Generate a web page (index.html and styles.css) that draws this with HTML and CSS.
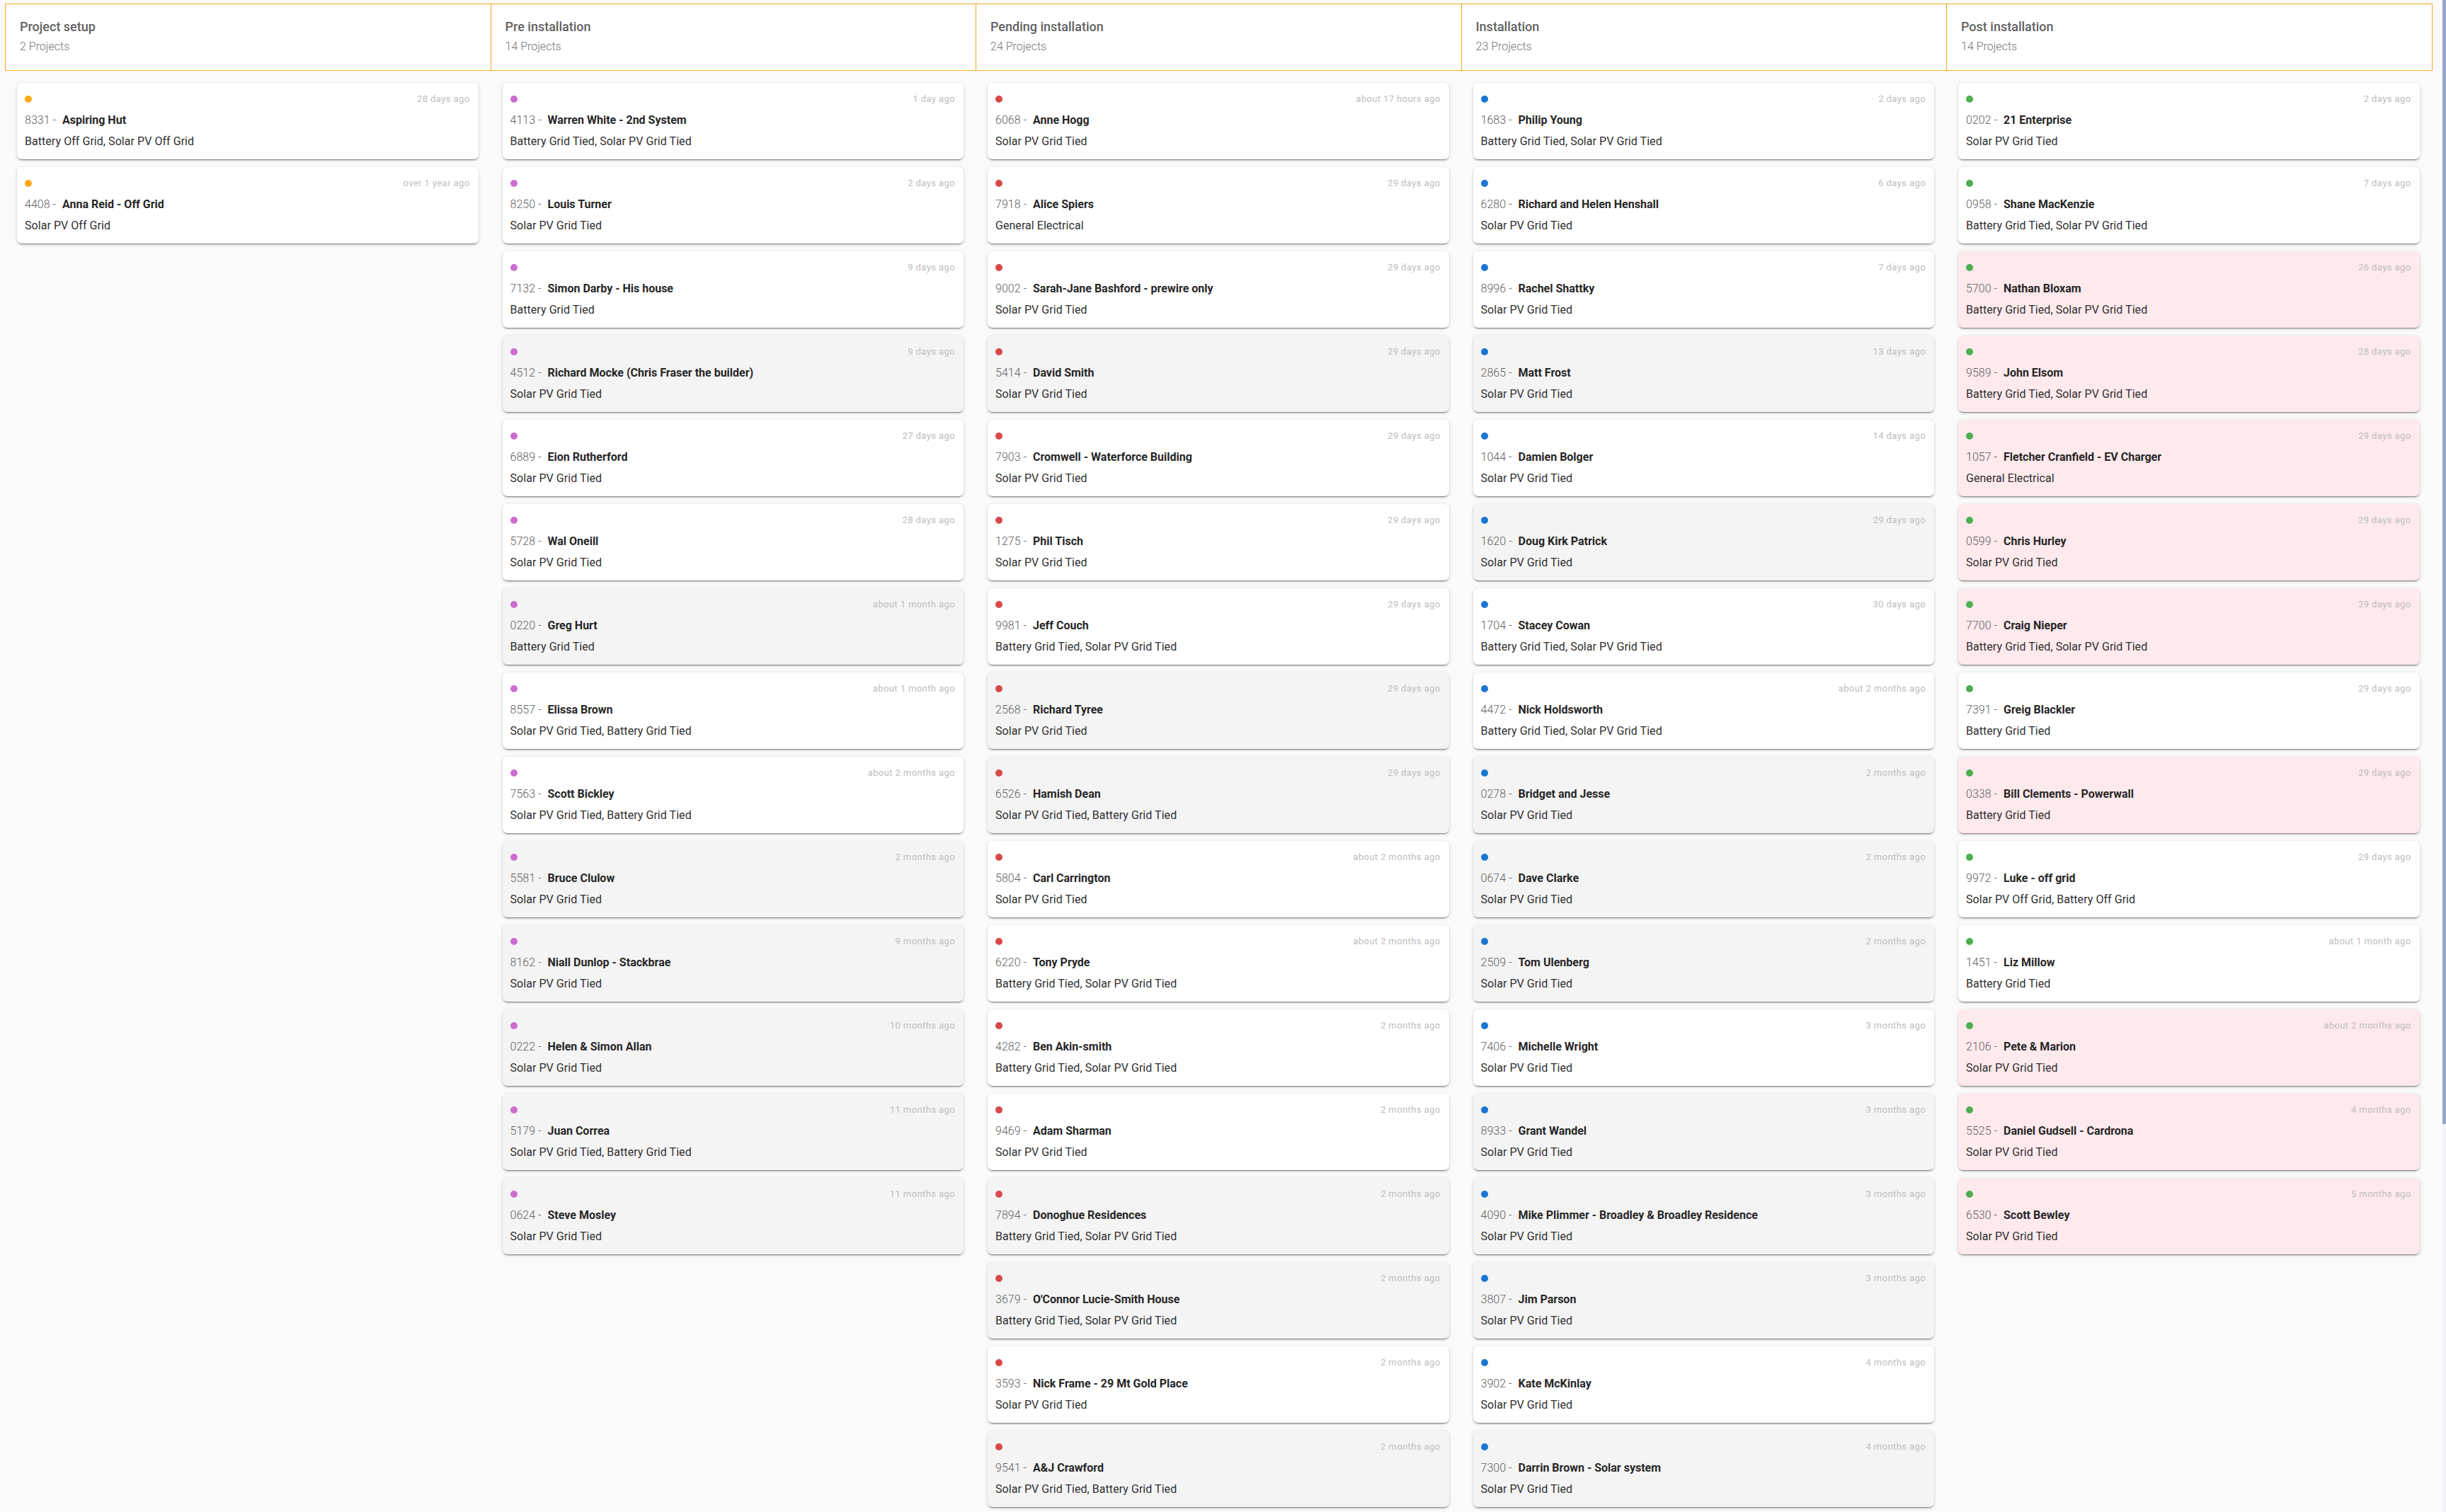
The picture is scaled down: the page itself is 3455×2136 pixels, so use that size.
FILE: index.html
```html
<!DOCTYPE html>
<html lang="en">
<head>
    <meta charset="UTF-8">
    <meta name="viewport" content="width=device-width, initial-scale=1.0">
    <title>Projects</title>
    <link rel="stylesheet" href="styles.css">
</head>
<body>
<div class="page">
<div class="board">

    <section class="column setup">
        <header class="column-head"><h2>Project setup</h2><p>2 Projects</p></header>
        <div class="card"><div class="card-top"><span class="dot"></span><span class="time">28 days ago</span></div><div class="card-title"><span class="num">8331 -</span><b>Aspiring Hut</b></div><div class="types">Battery Off Grid, Solar PV Off Grid</div></div>
        <div class="card"><div class="card-top"><span class="dot"></span><span class="time">over 1 year ago</span></div><div class="card-title"><span class="num">4408 -</span><b>Anna Reid - Off Grid</b></div><div class="types">Solar PV Off Grid</div></div>
    </section>

    <section class="column pre">
        <header class="column-head"><h2>Pre installation</h2><p>14 Projects</p></header>
        <div class="card"><div class="card-top"><span class="dot"></span><span class="time">1 day ago</span></div><div class="card-title"><span class="num">4113 -</span><b>Warren White - 2nd System</b></div><div class="types">Battery Grid Tied, Solar PV Grid Tied</div></div>
        <div class="card"><div class="card-top"><span class="dot"></span><span class="time">2 days ago</span></div><div class="card-title"><span class="num">8250 -</span><b>Louis Turner</b></div><div class="types">Solar PV Grid Tied</div></div>
        <div class="card"><div class="card-top"><span class="dot"></span><span class="time">9 days ago</span></div><div class="card-title"><span class="num">7132 -</span><b>Simon Darby - His house</b></div><div class="types">Battery Grid Tied</div></div>
        <div class="card grey"><div class="card-top"><span class="dot"></span><span class="time">9 days ago</span></div><div class="card-title"><span class="num">4512 -</span><b>Richard Mocke (Chris Fraser the builder)</b></div><div class="types">Solar PV Grid Tied</div></div>
        <div class="card"><div class="card-top"><span class="dot"></span><span class="time">27 days ago</span></div><div class="card-title"><span class="num">6889 -</span><b>Eion Rutherford</b></div><div class="types">Solar PV Grid Tied</div></div>
        <div class="card"><div class="card-top"><span class="dot"></span><span class="time">28 days ago</span></div><div class="card-title"><span class="num">5728 -</span><b>Wal Oneill</b></div><div class="types">Solar PV Grid Tied</div></div>
        <div class="card grey"><div class="card-top"><span class="dot"></span><span class="time">about 1 month ago</span></div><div class="card-title"><span class="num">0220 -</span><b>Greg Hurt</b></div><div class="types">Battery Grid Tied</div></div>
        <div class="card"><div class="card-top"><span class="dot"></span><span class="time">about 1 month ago</span></div><div class="card-title"><span class="num">8557 -</span><b>Elissa Brown</b></div><div class="types">Solar PV Grid Tied, Battery Grid Tied</div></div>
        <div class="card"><div class="card-top"><span class="dot"></span><span class="time">about 2 months ago</span></div><div class="card-title"><span class="num">7563 -</span><b>Scott Bickley</b></div><div class="types">Solar PV Grid Tied, Battery Grid Tied</div></div>
        <div class="card grey"><div class="card-top"><span class="dot"></span><span class="time">2 months ago</span></div><div class="card-title"><span class="num">5581 -</span><b>Bruce Clulow</b></div><div class="types">Solar PV Grid Tied</div></div>
        <div class="card grey"><div class="card-top"><span class="dot"></span><span class="time">9 months ago</span></div><div class="card-title"><span class="num">8162 -</span><b>Niall Dunlop - Stackbrae</b></div><div class="types">Solar PV Grid Tied</div></div>
        <div class="card grey"><div class="card-top"><span class="dot"></span><span class="time">10 months ago</span></div><div class="card-title"><span class="num">0222 -</span><b>Helen &amp; Simon Allan</b></div><div class="types">Solar PV Grid Tied</div></div>
        <div class="card grey"><div class="card-top"><span class="dot"></span><span class="time">11 months ago</span></div><div class="card-title"><span class="num">5179 -</span><b>Juan Correa</b></div><div class="types">Solar PV Grid Tied, Battery Grid Tied</div></div>
        <div class="card grey"><div class="card-top"><span class="dot"></span><span class="time">11 months ago</span></div><div class="card-title"><span class="num">0624 -</span><b>Steve Mosley</b></div><div class="types">Solar PV Grid Tied</div></div>
    </section>

    <section class="column pending">
        <header class="column-head"><h2>Pending installation</h2><p>24 Projects</p></header>
        <div class="card"><div class="card-top"><span class="dot"></span><span class="time">about 17 hours ago</span></div><div class="card-title"><span class="num">6068 -</span><b>Anne Hogg</b></div><div class="types">Solar PV Grid Tied</div></div>
        <div class="card"><div class="card-top"><span class="dot"></span><span class="time">29 days ago</span></div><div class="card-title"><span class="num">7918 -</span><b>Alice Spiers</b></div><div class="types">General Electrical</div></div>
        <div class="card"><div class="card-top"><span class="dot"></span><span class="time">29 days ago</span></div><div class="card-title"><span class="num">9002 -</span><b>Sarah-Jane Bashford - prewire only</b></div><div class="types">Solar PV Grid Tied</div></div>
        <div class="card grey"><div class="card-top"><span class="dot"></span><span class="time">29 days ago</span></div><div class="card-title"><span class="num">5414 -</span><b>David Smith</b></div><div class="types">Solar PV Grid Tied</div></div>
        <div class="card"><div class="card-top"><span class="dot"></span><span class="time">29 days ago</span></div><div class="card-title"><span class="num">7903 -</span><b>Cromwell - Waterforce Building</b></div><div class="types">Solar PV Grid Tied</div></div>
        <div class="card"><div class="card-top"><span class="dot"></span><span class="time">29 days ago</span></div><div class="card-title"><span class="num">1275 -</span><b>Phil Tisch</b></div><div class="types">Solar PV Grid Tied</div></div>
        <div class="card"><div class="card-top"><span class="dot"></span><span class="time">29 days ago</span></div><div class="card-title"><span class="num">9981 -</span><b>Jeff Couch</b></div><div class="types">Battery Grid Tied, Solar PV Grid Tied</div></div>
        <div class="card grey"><div class="card-top"><span class="dot"></span><span class="time">29 days ago</span></div><div class="card-title"><span class="num">2568 -</span><b>Richard Tyree</b></div><div class="types">Solar PV Grid Tied</div></div>
        <div class="card grey"><div class="card-top"><span class="dot"></span><span class="time">29 days ago</span></div><div class="card-title"><span class="num">6526 -</span><b>Hamish Dean</b></div><div class="types">Solar PV Grid Tied, Battery Grid Tied</div></div>
        <div class="card"><div class="card-top"><span class="dot"></span><span class="time">about 2 months ago</span></div><div class="card-title"><span class="num">5804 -</span><b>Carl Carrington</b></div><div class="types">Solar PV Grid Tied</div></div>
        <div class="card"><div class="card-top"><span class="dot"></span><span class="time">about 2 months ago</span></div><div class="card-title"><span class="num">6220 -</span><b>Tony Pryde</b></div><div class="types">Battery Grid Tied, Solar PV Grid Tied</div></div>
        <div class="card"><div class="card-top"><span class="dot"></span><span class="time">2 months ago</span></div><div class="card-title"><span class="num">4282 -</span><b>Ben Akin-smith</b></div><div class="types">Battery Grid Tied, Solar PV Grid Tied</div></div>
        <div class="card"><div class="card-top"><span class="dot"></span><span class="time">2 months ago</span></div><div class="card-title"><span class="num">9469 -</span><b>Adam Sharman</b></div><div class="types">Solar PV Grid Tied</div></div>
        <div class="card grey"><div class="card-top"><span class="dot"></span><span class="time">2 months ago</span></div><div class="card-title"><span class="num">7894 -</span><b>Donoghue Residences</b></div><div class="types">Battery Grid Tied, Solar PV Grid Tied</div></div>
        <div class="card grey"><div class="card-top"><span class="dot"></span><span class="time">2 months ago</span></div><div class="card-title"><span class="num">3679 -</span><b>O'Connor Lucie-Smith House</b></div><div class="types">Battery Grid Tied, Solar PV Grid Tied</div></div>
        <div class="card"><div class="card-top"><span class="dot"></span><span class="time">2 months ago</span></div><div class="card-title"><span class="num">3593 -</span><b>Nick Frame - 29 Mt Gold Place</b></div><div class="types">Solar PV Grid Tied</div></div>
        <div class="card grey"><div class="card-top"><span class="dot"></span><span class="time">2 months ago</span></div><div class="card-title"><span class="num">9541 -</span><b>A&amp;J Crawford</b></div><div class="types">Solar PV Grid Tied, Battery Grid Tied</div></div>
    </section>

    <section class="column install">
        <header class="column-head"><h2>Installation</h2><p>23 Projects</p></header>
        <div class="card"><div class="card-top"><span class="dot"></span><span class="time">2 days ago</span></div><div class="card-title"><span class="num">1683 -</span><b>Philip Young</b></div><div class="types">Battery Grid Tied, Solar PV Grid Tied</div></div>
        <div class="card"><div class="card-top"><span class="dot"></span><span class="time">6 days ago</span></div><div class="card-title"><span class="num">6280 -</span><b>Richard and Helen Henshall</b></div><div class="types">Solar PV Grid Tied</div></div>
        <div class="card"><div class="card-top"><span class="dot"></span><span class="time">7 days ago</span></div><div class="card-title"><span class="num">8996 -</span><b>Rachel Shattky</b></div><div class="types">Solar PV Grid Tied</div></div>
        <div class="card grey"><div class="card-top"><span class="dot"></span><span class="time">13 days ago</span></div><div class="card-title"><span class="num">2865 -</span><b>Matt Frost</b></div><div class="types">Solar PV Grid Tied</div></div>
        <div class="card"><div class="card-top"><span class="dot"></span><span class="time">14 days ago</span></div><div class="card-title"><span class="num">1044 -</span><b>Damien Bolger</b></div><div class="types">Solar PV Grid Tied</div></div>
        <div class="card grey"><div class="card-top"><span class="dot"></span><span class="time">29 days ago</span></div><div class="card-title"><span class="num">1620 -</span><b>Doug Kirk Patrick</b></div><div class="types">Solar PV Grid Tied</div></div>
        <div class="card"><div class="card-top"><span class="dot"></span><span class="time">30 days ago</span></div><div class="card-title"><span class="num">1704 -</span><b>Stacey Cowan</b></div><div class="types">Battery Grid Tied, Solar PV Grid Tied</div></div>
        <div class="card"><div class="card-top"><span class="dot"></span><span class="time">about 2 months ago</span></div><div class="card-title"><span class="num">4472 -</span><b>Nick Holdsworth</b></div><div class="types">Battery Grid Tied, Solar PV Grid Tied</div></div>
        <div class="card grey"><div class="card-top"><span class="dot"></span><span class="time">2 months ago</span></div><div class="card-title"><span class="num">0278 -</span><b>Bridget and Jesse</b></div><div class="types">Solar PV Grid Tied</div></div>
        <div class="card grey"><div class="card-top"><span class="dot"></span><span class="time">2 months ago</span></div><div class="card-title"><span class="num">0674 -</span><b>Dave Clarke</b></div><div class="types">Solar PV Grid Tied</div></div>
        <div class="card grey"><div class="card-top"><span class="dot"></span><span class="time">2 months ago</span></div><div class="card-title"><span class="num">2509 -</span><b>Tom Ulenberg</b></div><div class="types">Solar PV Grid Tied</div></div>
        <div class="card"><div class="card-top"><span class="dot"></span><span class="time">3 months ago</span></div><div class="card-title"><span class="num">7406 -</span><b>Michelle Wright</b></div><div class="types">Solar PV Grid Tied</div></div>
        <div class="card grey"><div class="card-top"><span class="dot"></span><span class="time">3 months ago</span></div><div class="card-title"><span class="num">8933 -</span><b>Grant Wandel</b></div><div class="types">Solar PV Grid Tied</div></div>
        <div class="card grey"><div class="card-top"><span class="dot"></span><span class="time">3 months ago</span></div><div class="card-title"><span class="num">4090 -</span><b>Mike Plimmer - Broadley &amp; Broadley Residence</b></div><div class="types">Solar PV Grid Tied</div></div>
        <div class="card grey"><div class="card-top"><span class="dot"></span><span class="time">3 months ago</span></div><div class="card-title"><span class="num">3807 -</span><b>Jim Parson</b></div><div class="types">Solar PV Grid Tied</div></div>
        <div class="card"><div class="card-top"><span class="dot"></span><span class="time">4 months ago</span></div><div class="card-title"><span class="num">3902 -</span><b>Kate McKinlay</b></div><div class="types">Solar PV Grid Tied</div></div>
        <div class="card grey"><div class="card-top"><span class="dot"></span><span class="time">4 months ago</span></div><div class="card-title"><span class="num">7300 -</span><b>Darrin Brown - Solar system</b></div><div class="types">Solar PV Grid Tied</div></div>
    </section>

    <section class="column post">
        <header class="column-head"><h2>Post installation</h2><p>14 Projects</p></header>
        <div class="card"><div class="card-top"><span class="dot"></span><span class="time">2 days ago</span></div><div class="card-title"><span class="num">0202 -</span><b>21 Enterprise</b></div><div class="types">Solar PV Grid Tied</div></div>
        <div class="card"><div class="card-top"><span class="dot"></span><span class="time">7 days ago</span></div><div class="card-title"><span class="num">0958 -</span><b>Shane MacKenzie</b></div><div class="types">Battery Grid Tied, Solar PV Grid Tied</div></div>
        <div class="card pink"><div class="card-top"><span class="dot"></span><span class="time">26 days ago</span></div><div class="card-title"><span class="num">5700 -</span><b>Nathan Bloxam</b></div><div class="types">Battery Grid Tied, Solar PV Grid Tied</div></div>
        <div class="card pink"><div class="card-top"><span class="dot"></span><span class="time">28 days ago</span></div><div class="card-title"><span class="num">9589 -</span><b>John Elsom</b></div><div class="types">Battery Grid Tied, Solar PV Grid Tied</div></div>
        <div class="card pink"><div class="card-top"><span class="dot"></span><span class="time">29 days ago</span></div><div class="card-title"><span class="num">1057 -</span><b>Fletcher Cranfield - EV Charger</b></div><div class="types">General Electrical</div></div>
        <div class="card pink"><div class="card-top"><span class="dot"></span><span class="time">29 days ago</span></div><div class="card-title"><span class="num">0599 -</span><b>Chris Hurley</b></div><div class="types">Solar PV Grid Tied</div></div>
        <div class="card pink"><div class="card-top"><span class="dot"></span><span class="time">29 days ago</span></div><div class="card-title"><span class="num">7700 -</span><b>Craig Nieper</b></div><div class="types">Battery Grid Tied, Solar PV Grid Tied</div></div>
        <div class="card"><div class="card-top"><span class="dot"></span><span class="time">29 days ago</span></div><div class="card-title"><span class="num">7391 -</span><b>Greig Blackler</b></div><div class="types">Battery Grid Tied</div></div>
        <div class="card pink"><div class="card-top"><span class="dot"></span><span class="time">29 days ago</span></div><div class="card-title"><span class="num">0338 -</span><b>Bill Clements - Powerwall</b></div><div class="types">Battery Grid Tied</div></div>
        <div class="card"><div class="card-top"><span class="dot"></span><span class="time">29 days ago</span></div><div class="card-title"><span class="num">9972 -</span><b>Luke - off grid</b></div><div class="types">Solar PV Off Grid, Battery Off Grid</div></div>
        <div class="card"><div class="card-top"><span class="dot"></span><span class="time">about 1 month ago</span></div><div class="card-title"><span class="num">1451 -</span><b>Liz Millow</b></div><div class="types">Battery Grid Tied</div></div>
        <div class="card pink"><div class="card-top"><span class="dot"></span><span class="time">about 2 months ago</span></div><div class="card-title"><span class="num">2106 -</span><b>Pete &amp; Marion</b></div><div class="types">Solar PV Grid Tied</div></div>
        <div class="card pink"><div class="card-top"><span class="dot"></span><span class="time">4 months ago</span></div><div class="card-title"><span class="num">5525 -</span><b>Daniel Gudsell - Cardrona</b></div><div class="types">Solar PV Grid Tied</div></div>
        <div class="card pink"><div class="card-top"><span class="dot"></span><span class="time">5 months ago</span></div><div class="card-title"><span class="num">6530 -</span><b>Scott Bewley</b></div><div class="types">Solar PV Grid Tied</div></div>
    </section>

</div>
<div class="scroll-track"><div class="scroll-thumb"></div></div>
</div>
</body>
</html>
```

FILE: styles.css
```css
html, body {
    margin: 0;
    height: 100%;
    overflow: hidden;
}
body {
    font-family: Roboto, Arial, sans-serif;
    background-color: #fafafa;
    color: #212121;
}
.page {
    display: flex;
    justify-content: space-between;
    height: 100%;
}
.board {
    display: grid;
    grid-template-columns: repeat(5, 685.5px);
    margin: 5px 0 0 7px;
    align-items: start;
}
.column-head {
    height: 95px;
    box-sizing: border-box;
    padding: 20px 20px 0;
    margin-right: -1px;
    margin-bottom: 17px;
    background-color: #fff;
    border: 1px solid #f5a623;
}
.column-head h2 {
    margin: 0;
    font-size: 18px;
    line-height: 24px;
    font-weight: 500;
    color: #616161;
}
.column-head p {
    margin: 4px 0 0;
    font-size: 16px;
    line-height: 24px;
    font-weight: 300;
    color: #757575;
}
.card {
    height: 108px;
    box-sizing: border-box;
    margin: 0 17px 11px;
    padding: 8px 12px 10px 11px;
    background-color: #fff;
    border-radius: 7px;
    box-shadow: 0 3px 1px -2px rgba(0,0,0,0.3), 0 2px 2px 0 rgba(0,0,0,0.14), 0 1px 5px 0 rgba(0,0,0,0.14);
}
.card.grey {
    background-color: #f4f4f4;
}
.card.pink {
    background-color: #fee9ec;
}
.card-top, .card-title, .types {
    height: 30px;
    line-height: 30px;
    white-space: nowrap;
}
.card-top {
    display: flex;
    align-items: center;
    justify-content: space-between;
}
.dot {
    width: 10px;
    height: 10px;
    border-radius: 50%;
}
.time {
    font-size: 13px;
    letter-spacing: 0.4px;
    color: #bdbdbd;
}
.card-title {
    font-size: 16px;
}
.num {
    margin-right: 9px;
    font-weight: 300;
    color: #616161;
}
.card-title b {
    font-weight: 700;
    color: #262626;
}
.types {
    font-size: 16px;
    letter-spacing: 0.05px;
    color: #303030;
}
.setup .dot { background-color: #ffa91a; }
.pre .dot { background-color: #cc6ccf; }
.pending .dot { background-color: #d94848; }
.install .dot { background-color: #1976d2; }
.post .dot { background-color: #4caf50; }
.scroll-track {
    width: 5px;
    background-color: #f3f4f7;
}
.scroll-thumb {
    height: 1588px;
    background-color: #94a8c8;
}
```
